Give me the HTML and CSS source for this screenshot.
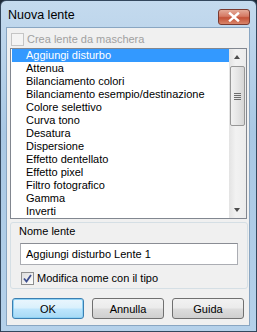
FILE: index.html
```html
<!DOCTYPE html>
<html>
<head>
  <title>Nuova lente</title>
  <link rel="stylesheet" href="styles.css">
</head>
<body>
  <div class="window">
    <div class="titlebar">
      <span class="title">Nuova lente</span>
      <button class="close" type="button" aria-label="Chiudi">
        <svg width="12" height="10" viewBox="0 0 12 10">
          <path d="M2 1.5 L10 8.5 M10 1.5 L2 8.5" stroke="#fff" stroke-width="2.4" stroke-linecap="square"/>
        </svg>
      </button>
    </div>
    <div class="client">
      <label class="check disabled">
        <span class="box"></span>
        <span>Crea lente da maschera</span>
      </label>

      <div class="listbox">
        <ul class="items">
          <li class="selected">Aggiungi disturbo</li>
          <li>Attenua</li>
          <li>Bilanciamento colori</li>
          <li>Bilanciamento esempio/destinazione</li>
          <li>Colore selettivo</li>
          <li>Curva tono</li>
          <li>Desatura</li>
          <li>Dispersione</li>
          <li>Effetto dentellato</li>
          <li>Effetto pixel</li>
          <li>Filtro fotografico</li>
          <li>Gamma</li>
          <li>Inverti</li>
        </ul>
        <div class="scrollbar">
          <div class="arrow up"></div>
          <div class="track">
            <div class="thumb"><span class="grip"></span></div>
          </div>
          <div class="arrow down"></div>
        </div>
      </div>

      <div class="group">
        <div class="group-label">Nome lente</div>
        <input class="textbox" type="text" value="Aggiungi disturbo Lente 1">
        <label class="check">
          <span class="box checked">
            <svg width="9" height="9" viewBox="0 0 9 9">
              <path d="M1 4.5 L3.5 7.5 L8 1" fill="none" stroke="#3d4e8e" stroke-width="1.8"/>
            </svg>
          </span>
          <span>Modifica nome con il tipo</span>
        </label>
      </div>

      <div class="buttons">
        <button class="btn default" type="button">OK</button>
        <button class="btn" type="button">Annulla</button>
        <button class="btn" type="button">Guida</button>
      </div>
    </div>
  </div>
</body>
</html>
```

FILE: styles.css
```css
body {
  margin: 0;
  background: #1d2a38;
  font-family: "Liberation Sans", Arial, sans-serif;
  font-size: 11px;
  color: #000;
}

.window {
  width: 257px;
  height: 332px;
  box-sizing: border-box;
  border: 1px solid #33475d;
  border-radius: 6px 6px 0 0;
  background: linear-gradient(#c4daee, #a9c8e4 40%, #b5d1ea);
  padding: 0 6px 5px 5px;
  display: flex;
  flex-direction: column;
}

.titlebar {
  height: 26px;
  display: flex;
  align-items: center;
  justify-content: space-between;
  padding: 0 0 0 2px;
}

.title {
  font-size: 12.5px;
  color: #000;
  padding-top: 1px;
}

.close {
  align-self: flex-end;
  margin-bottom: 2px;
  width: 32px;
  height: 16px;
  border: 1px solid #7a3a30;
  border-radius: 3px;
  background: linear-gradient(#e4aa98, #d57a64 45%, #c45238 55%, #d8856a);
  display: flex;
  align-items: center;
  justify-content: center;
  padding: 0;
}

.client {
  flex: 1;
  background: #f0f0f0;
  border: 1px solid #89a6c2;
  padding: 4px 2px 0 3px;
}

.check {
  display: flex;
  align-items: center;
  gap: 3px;
  height: 14px;
}

.check.disabled {
  color: #a0a0a0;
  margin-left: 1px;
  margin-bottom: 2px;
}

.box {
  width: 11px;
  height: 11px;
  border: 1px solid #8e8f8f;
  background: linear-gradient(135deg, #dcdcdc, #fefefe);
  display: flex;
  align-items: center;
  justify-content: center;
}

.check.disabled .box {
  border-color: #c5c5c5;
  background: #f4f4f4;
}

.listbox {
  height: 171px;
  box-sizing: border-box;
  border: 1px solid #828790;
  background: #fff;
  display: flex;
  padding: 0 0 0 1px;
}

.items {
  list-style: none;
  margin: 0;
  padding: 0;
  flex: 1;
}

.items li {
  height: 13px;
  line-height: 13px;
  padding-left: 14px;
  white-space: nowrap;
}

.items li.selected {
  background: #3399ff;
  color: #fff;
}

.scrollbar {
  width: 17px;
  display: flex;
  flex-direction: column;
  background: linear-gradient(90deg, #e3e3e3, #f2f2f2 40%, #ececec);
}

.arrow {
  height: 17px;
  position: relative;
}

.arrow::after {
  content: "";
  position: absolute;
  left: 5px;
  border-left: 3.5px solid transparent;
  border-right: 3.5px solid transparent;
}

.arrow.up::after {
  top: 6px;
  border-bottom: 4px solid #4d4d4d;
}

.arrow.down::after {
  top: 7px;
  border-top: 4px solid #4d4d4d;
}

.track {
  flex: 1;
  padding: 0 1px;
}

.thumb {
  height: 60px;
  box-sizing: border-box;
  border: 1px solid #979797;
  border-radius: 2px;
  background: linear-gradient(90deg, #f1f1f1, #e5e5e5 50%, #d6d6d6);
  display: flex;
  align-items: center;
  justify-content: center;
}

.grip {
  width: 7px;
  height: 7px;
  background: repeating-linear-gradient(#6d6d6d 0 1px, transparent 1px 2px);
}

.group {
  margin: 3px -1px 0 0;
  height: 67px;
  box-sizing: border-box;
  border: 1px solid #d5dfe5;
  border-radius: 3px;
  padding: 2px 10px 0 8px;
}

.group-label {
  height: 13px;
  line-height: 13px;
}

.textbox {
  display: block;
  width: 218px;
  height: 22px;
  box-sizing: border-box;
  margin: 5px 0 6px 1px;
  border: 1px solid #abadb3;
  border-top-color: #8a8d94;
  background: #fff;
  font: inherit;
  padding: 0 5px;
  color: #000;
}

.group .check {
  margin-left: 2px;
}

.buttons {
  display: flex;
  gap: 8px;
  padding: 9px 0 0 2px;
}

.btn {
  width: 72px;
  height: 21px;
  border: 1px solid #707070;
  border-radius: 3px;
  background: linear-gradient(#f2f2f2, #ebebeb 48%, #dddddd 52%, #cfcfcf);
  font: inherit;
  color: #000;
  padding: 0;
}

.btn.default {
  border-color: #3c7fb1;
  box-shadow: inset 0 0 0 1px #8fd2f5;
  background: linear-gradient(#eaf6fd, #d9f0fc 48%, #bee6fd 52%, #a7d9f5);
}
```
